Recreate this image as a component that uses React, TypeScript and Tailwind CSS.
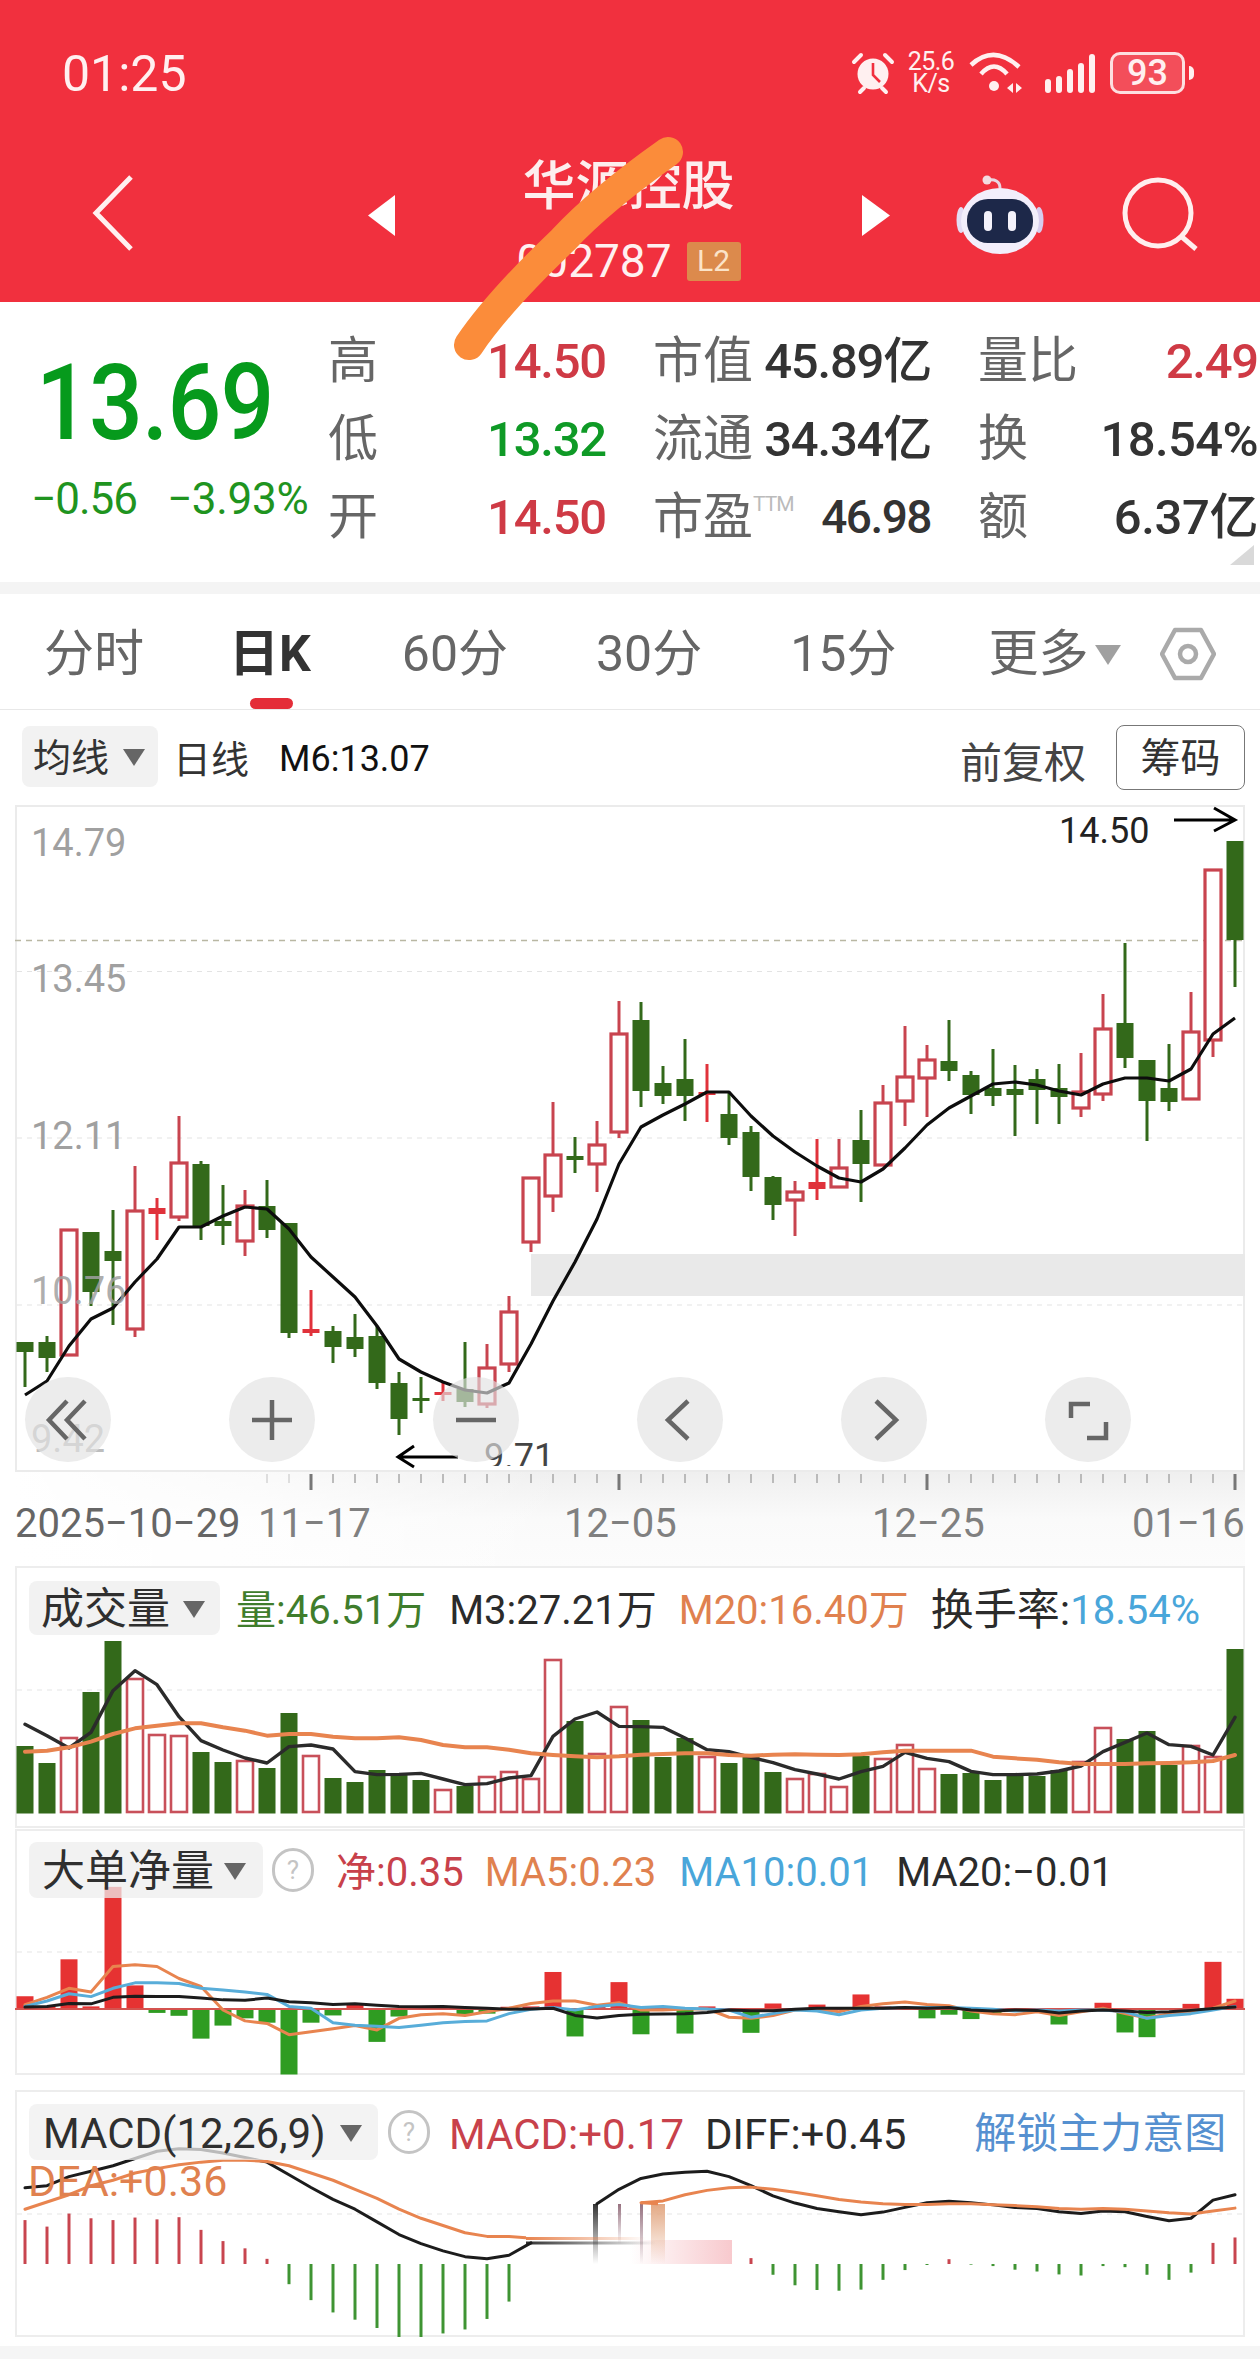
import React from "react";

// ---- chart geometry: candles sit on a 22px pitch, coordinates are page pixels ----
const X = (i: number) => 25 + 22 * i;
const pts = (ys: number[]) => ys.map((y, i) => `${X(i)},${y}`).join(" ");

type Candle = [number, number, number, number, "g" | "h" | "r"];
const candles: Candle[] = [
  [1343, 1343, 1353, 1388, "g"], [1337, 1343, 1359, 1373, "g"], [1231, 1231, 1356, 1356, "h"], [1233, 1233, 1293, 1307, "g"],
  [1211, 1252, 1262, 1326, "g"], [1167, 1212, 1330, 1338, "h"], [1199, 1209, 1215, 1241, "r"], [1117, 1164, 1218, 1222, "h"],
  [1162, 1165, 1227, 1241, "g"], [1186, 1222, 1227, 1246, "g"], [1191, 1207, 1242, 1257, "h"], [1181, 1207, 1231, 1239, "g"],
  [1224, 1224, 1334, 1339, "g"], [1291, 1330, 1334, 1337, "r"], [1327, 1332, 1348, 1364, "g"], [1315, 1338, 1350, 1358, "g"],
  [1327, 1337, 1384, 1390, "g"], [1373, 1384, 1420, 1436, "g"], [1378, 1399, 1402, 1414, "g"], [1384, 1393, 1396, 1402, "r"],
  [1343, 1390, 1403, 1408, "g"], [1345, 1369, 1405, 1409, "h"], [1297, 1313, 1365, 1373, "h"], [1179, 1179, 1243, 1253, "h"],
  [1103, 1156, 1197, 1213, "h"], [1138, 1157, 1161, 1174, "g"], [1122, 1146, 1165, 1193, "h"], [1002, 1035, 1133, 1139, "h"],
  [1003, 1021, 1092, 1108, "g"], [1067, 1084, 1097, 1105, "g"], [1040, 1080, 1097, 1122, "g"], [1065, 1093, 1096, 1123, "r"],
  [1094, 1115, 1139, 1146, "g"], [1127, 1133, 1178, 1192, "g"], [1177, 1178, 1206, 1221, "g"], [1182, 1193, 1201, 1237, "h"],
  [1140, 1183, 1190, 1201, "r"], [1140, 1169, 1188, 1188, "h"], [1111, 1141, 1165, 1203, "g"], [1086, 1104, 1166, 1166, "h"],
  [1027, 1078, 1102, 1127, "h"], [1046, 1061, 1079, 1118, "h"], [1021, 1062, 1072, 1082, "g"], [1072, 1076, 1096, 1115, "g"],
  [1050, 1089, 1097, 1107, "g"], [1066, 1090, 1096, 1137, "g"], [1070, 1080, 1091, 1125, "g"], [1065, 1089, 1098, 1125, "g"],
  [1054, 1093, 1109, 1118, "h"], [995, 1030, 1095, 1102, "h"], [944, 1024, 1059, 1069, "g"], [1061, 1061, 1102, 1142, "g"],
  [1045, 1089, 1103, 1112, "g"], [993, 1033, 1100, 1100, "h"], [871, 871, 1041, 1058, "h"], [842, 842, 941, 988, "g"],
];

const ma6 = [
  1396, 1382, 1347, 1320, 1309, 1283, 1260, 1228, 1228, 1217, 1208, 1210, 1230, 1258, 1278, 1298, 1327, 1360, 1373, 1383, 1391, 1394,
  1384, 1345, 1302, 1263, 1220, 1165, 1128, 1116, 1105, 1093, 1093, 1117, 1137, 1153, 1167, 1179, 1183, 1170, 1149, 1126, 1109, 1097,
  1085, 1083, 1086, 1092, 1096, 1085, 1079, 1079, 1082, 1070, 1035, 1019,
];

const volTops = [
  1747, 1764, 1739, 1693, 1642, 1680, 1736, 1737, 1753, 1763, 1762, 1769, 1714, 1757, 1779, 1783, 1771, 1774, 1781, 1791, 1787, 1778,
  1773, 1780, 1661, 1722, 1755, 1708, 1721, 1758, 1739, 1758, 1764, 1758, 1773, 1780, 1775, 1788, 1757, 1760, 1746, 1770, 1775, 1774,
  1781, 1777, 1777, 1771, 1763, 1729, 1740, 1732, 1766, 1747, 1758, 1650,
];
const volUp = [2, 5, 6, 7, 10, 13, 19, 21, 22, 23, 24, 26, 27, 31, 35, 36, 37, 39, 40, 41, 48, 49, 53, 54];
const volY = (v: number) => 1620 + v / 3;
const m3 = [
  316, 350, 387, 340, 215, 155, 197, 293, 365, 393, 417, 432, 383, 378, 390, 458, 467, 466, 463, 480, 497, 494, 477, 470, 352, 300, 279,
  322, 323, 325, 357, 392, 398, 415, 431, 452, 465, 480, 458, 442, 400, 418, 428, 457, 467, 467, 465, 456, 441, 398, 370, 342, 377, 382,
  408, 295,
].map(volY);
const m20 = [
  398, 395, 385, 368, 345, 328, 320, 313, 313, 325, 335, 350, 345, 345, 353, 358, 358, 355, 363, 378, 385, 385, 392, 403, 408, 412, 415,
  412, 407, 405, 403, 403, 408, 410, 407, 406, 407, 408, 406, 400, 395, 395, 395, 395, 413, 418, 422, 430, 435, 435, 435, 433, 432, 430,
  426, 408,
].map(volY);

// Lower panels share one vertical scale factor.
const subY = (v: number) => 1810 + v / 2.761;
const netBars = [
  517, 545, 415, 545, 215, 487, 563, 571, 634, 598, 578, 590, 733, 590, 570, 537, 643, 573, 552, 545, 568, 565, 546, 545, 450, 628, 545,
  478, 622, 555, 620, 545, 555, 618, 537, 552, 540, 550, 512, 545, 545, 578, 568, 580, 565, 555, 550, 595, 555, 535, 617, 630, 555, 538,
  422, 524,
];
const netMa5 = [
  540, 520, 495, 505, 435, 430, 435, 468, 490, 555, 585, 592, 623, 615, 607, 598, 610, 578, 568, 565, 570, 560, 550, 537, 530, 530, 542,
  535, 555, 555, 552, 552, 575, 578, 570, 555, 552, 560, 545, 538, 533, 540, 543, 558, 565, 568, 560, 570, 560, 550, 565, 577, 565, 560,
  550, 530,
].map(subY);
const netMa10 = [
  545, 530, 510, 518, 495, 480, 480, 482, 495, 500, 505, 512, 545, 550, 590, 597, 600, 603, 597, 590, 587, 585, 565, 553, 548, 555, 545,
  540, 548, 545, 550, 552, 555, 575, 565, 555, 558, 568, 555, 550, 548, 548, 548, 550, 553, 558, 555, 558, 555, 555, 560, 578, 570, 565,
  555, 545,
].map(subY);
const netMa20 = [
  547, 545, 537, 538, 520, 517, 518, 518, 522, 527, 528, 522, 532, 535, 540, 538, 542, 545, 546, 545, 548, 550, 553, 552, 550, 570, 577,
  570, 567, 566, 565, 562, 555, 557, 557, 553, 550, 550, 550, 550, 548, 550, 548, 555, 558, 555, 556, 563, 558, 555, 558, 562, 560, 556,
  551, 547,
].map(subY);

// MACD histogram: index, far end of the bar from the zero line.
const macdBars: [number, number][] = [
  [0, 1135], [1, 1153], [2, 1117], [3, 1130], [4, 1135], [5, 1128], [6, 1133], [7, 1127], [8, 1162], [9, 1193], [10, 1213], [11, 1242],
  [12, 1312], [13, 1356], [14, 1390], [15, 1410], [16, 1433], [17, 1458], [18, 1458], [19, 1448], [20, 1437], [21, 1408], [22, 1360],
  [33, 1240], [34, 1286], [35, 1315], [36, 1328], [37, 1330], [38, 1327], [39, 1300], [40, 1273], [41, 1259], [42, 1243], [43, 1258],
  [44, 1262], [45, 1272], [46, 1277], [47, 1285], [48, 1288], [49, 1262], [50, 1265], [51, 1286], [52, 1300], [53, 1280], [54, 1198], [55, 1183],
];
const diffA = [1046, 1040, 1015, 1000, 985, 965, 945, 938, 940, 950, 962, 975, 1010, 1045, 1078, 1105, 1140, 1175, 1200, 1220, 1236, 1242, 1232, 1198];
const diffB = [1090, 1050, 1020, 1008, 1003, 1000, 1015, 1040, 1068, 1088, 1103, 1112, 1120, 1113, 1100, 1087, 1083, 1087, 1093, 1100, 1103, 1112, 1117, 1110, 1112, 1125, 1137, 1130, 1080, 1065];
const deaA = [1105, 1085, 1065, 1040, 1025, 1005, 993, 982, 975, 970, 970, 973, 985, 1005, 1025, 1050, 1075, 1105, 1130, 1150, 1170, 1180, 1180];
const deaB = [1087, 1082, 1065, 1053, 1046, 1044, 1050, 1058, 1068, 1078, 1085, 1090, 1092, 1092, 1090, 1090, 1093, 1095, 1098, 1103, 1105, 1103, 1105, 1110, 1115, 1118, 1110, 1102];

const Line = ({ ys, stroke, w = 3, from = 0 }: { ys: number[]; stroke: string; w?: number; from?: number }) => (
  <polyline
    points={ys.map((y, i) => `${X(i + from)},${y}`).join(" ")}
    fill="none"
    stroke={stroke}
    strokeWidth={w}
    strokeLinejoin="round"
    strokeLinecap="round"
  />
);

const Caret = ({ className = "" }: { className?: string }) => (
  <svg viewBox="0 0 22 17" className={`block w-[22px] h-[17px] ${className}`}>
    <path d="M0 0H22L11 17Z" fill="currentColor" />
  </svg>
);

const HelpDot = () => (
  <span className="w-[42px] h-[44px] rounded-full border-[3px] border-[#c4c4c4] flex items-center justify-center text-[26px] leading-none text-[#c4c4c4]">
    ?
  </span>
);

const RoundButton = ({ children }: { children: React.ReactNode }) => (
  <div className="w-[86px] h-[85px] rounded-full bg-[#e2e2e2]/65 flex items-center justify-center">
    <svg viewBox="0 0 46 46" className="w-[46px] h-[46px]" fill="none" stroke="#666" strokeWidth="4.5">
      {children}
    </svg>
  </div>
);

const Quote = ({ label, value, tone }: { label: React.ReactNode; value: string; tone: string }) => (
  <div className="flex items-center justify-between h-[78px]">
    <span className="text-[50px] leading-none text-[#666] whitespace-nowrap">{label}</span>
    <span className={`font-medium leading-none whitespace-nowrap ${tone}`}>{value}</span>
  </div>
);

const valueText = "text-[49px] tracking-[-1.2px]";

export default function App() {
  return (
    <div className="relative w-[1260px] h-[2378px] overflow-hidden bg-white [font-family:Roboto,'Noto_Sans_CJK_SC',sans-serif]">
      {/* red title area */}
      <header className="h-[302px] bg-[#f1303e] text-[#fff0f0] flex flex-col">
        <div className="h-[150px] pt-[46px] pl-[62px] pr-[66px] flex items-start">
          <span className="text-[50px] leading-[56px]">01:25</span>
          <div className="ml-auto flex items-center h-[46px] mt-[4px]">
            <svg viewBox="0 0 44 44" className="w-[44px] h-[44px]">
              <circle cx="22" cy="23" r="15.5" fill="#fff0f0" />
              <path d="M22 12V24L29 31" fill="none" stroke="#f1303e" strokeWidth="2.6" />
              <path d="M3 11 10 4M41 11 34 4M9 41l4-4M35 41l-4-4" stroke="#fff0f0" strokeWidth="4" strokeLinecap="round" />
            </svg>
            <div className="ml-[10px] w-[52px] text-center text-[25px] leading-[22px] tracking-[-0.5px]">
              <div>25.6</div>
              <div>K/s</div>
            </div>
            <svg viewBox="0 0 58 46" className="ml-[10px] w-[58px] h-[46px]" fill="none" stroke="#fff0f0" strokeWidth="4.5">
              <path d="M4 15Q27 -6 52 17" />
              <path d="M14 24Q27 9 40 24" />
              <circle cx="27" cy="36" r="5" fill="#fff0f0" stroke="none" />
              <path d="M46 33l-6 5 6 5zM49 33l6 5-6 5z" fill="#fff0f0" stroke="none" />
            </svg>
            <div className="ml-[20px] flex items-end gap-[5px] h-[40px]">
              <i className="block w-[6px] h-[14px] rounded-full bg-[#fff0f0]" />
              <i className="block w-[6px] h-[17px] rounded-full bg-[#fff0f0]" />
              <i className="block w-[6px] h-[24px] rounded-full bg-[#fff0f0]" />
              <i className="block w-[6px] h-[30px] rounded-full bg-[#fff0f0]" />
              <i className="block w-[6px] h-[39px] rounded-full bg-[#fff0f0]" />
            </div>
            <div className="ml-[15px] w-[75px] h-[42px] rounded-[10px] border-[3px] border-[#fddfe0] bg-white/15 flex items-center justify-center text-[36px] font-medium leading-none">
              93
            </div>
            <i className="block ml-[4px] w-[5px] h-[14px] rounded-r-full bg-[#fff0f0]" />
          </div>
        </div>
        <div className="flex items-start pl-[92px]">
          <svg viewBox="0 0 41 76" className="mt-[25px] w-[41px] h-[76px]" fill="none" stroke="#fff0f0" strokeWidth="5">
            <path d="M39 2 4 38l35 36" />
          </svg>
          <svg viewBox="0 0 27 41" className="ml-[235px] mt-[45px] w-[27px] h-[41px]">
            <path d="M27 0V41L0 20.5Z" fill="#fff" />
          </svg>
          <div className="w-[467px] flex flex-col items-center">
            <span className="mt-[9px] text-[53px] leading-[56px] font-medium text-[#fdeeee]">华源控股</span>
            <div className="mt-[26px] flex items-center gap-[15px]">
              <span className="text-[46px] leading-[40px]">002787</span>
              <span className="w-[54px] h-[39px] bg-[#dc8a4c] rounded-[3px] flex items-center justify-center text-[30px] leading-none text-[#fbe3c8]">
                L2
              </span>
            </div>
          </div>
          <svg viewBox="0 0 28 41" className="mt-[45px] w-[28px] h-[41px]">
            <path d="M0 0V41L28 20.5Z" fill="#fff" />
          </svg>
          {/* assistant robot */}
          <svg viewBox="0 0 88 80" className="ml-[66px] mt-[24px] w-[88px] h-[80px]">
            <path d="M44 14C44 7 38 5 33 6" fill="none" stroke="#e9d5e2" strokeWidth="3" />
            <circle cx="31" cy="6" r="4.5" fill="#f3dbe0" />
            <ellipse cx="5" cy="46" rx="4.5" ry="13" fill="#e2dcf3" />
            <ellipse cx="83" cy="46" rx="4.5" ry="13" fill="#d6cdee" />
            <ellipse cx="44" cy="47" rx="39" ry="33" fill="#f2eefb" />
            <rect x="11" y="25" width="66" height="44" rx="21" fill="#1d2849" />
            <rect x="28" y="37" width="8" height="20" rx="4" fill="#f4f2fb" />
            <rect x="52" y="37" width="8" height="20" rx="4" fill="#f4f2fb" />
          </svg>
          <svg viewBox="0 0 78 74" className="ml-[78px] mt-[27px] w-[78px] h-[74px]" fill="none" stroke="#ffeeee" strokeWidth="5">
            <circle cx="36" cy="36" r="33" />
            <path d="M60 60 74 72" />
          </svg>
        </div>
      </header>

      {/* quote summary */}
      <section className="h-[280px] flex pt-[20px]">
        <div className="w-[328px] pl-[36px] flex flex-col">
          <span className="mt-[31px] block origin-left scale-x-[.895] text-[106px] leading-[100px] font-medium text-[#069a1c] tracking-[-1px] whitespace-nowrap">
            13.69
          </span>
          <div className="mt-[24px] -ml-[5px] flex text-[44px] leading-none text-[#1f941f] whitespace-nowrap">
            <span className="tracking-[-1px]">−0.56</span>
            <span className="ml-[30px] tracking-[-0.3px]">−3.93%</span>
          </div>
        </div>
        <div className="grid grid-cols-[278px_278px_280px] gap-x-[47px] auto-rows-[78px] h-fit">
          <Quote label="高" value="14.50" tone={`${valueText} text-[#cf3a45]`} />
          <Quote label="市值" value="45.89亿" tone={`${valueText} text-[#333]`} />
          <Quote label="量比" value="2.49" tone={`${valueText} text-[#cf3a45]`} />
          <Quote label="低" value="13.32" tone={`${valueText} text-[#0f9a26]`} />
          <Quote label="流通" value="34.34亿" tone={`${valueText} text-[#333]`} />
          <Quote label="换" value="18.54%" tone="text-[49px] tracking-[-0.6px] text-[#333]" />
          <Quote label="开" value="14.50" tone={`${valueText} text-[#cf3a45]`} />
          <Quote
            label={
              <span className="flex items-start">
                市盈<small className="text-[21px] leading-[24px] text-[#bbb] tracking-[-1px]">TTM</small>
              </span>
            }
            value="46.98"
            tone="text-[46px] tracking-[-1.5px] text-[#333]"
          />
          <Quote label="额" value="6.37亿" tone="text-[49px] tracking-[-0.4px] text-[#333]" />
        </div>
        <svg viewBox="0 0 24 20" className="absolute left-[1230px] top-[545px] w-[24px] h-[20px]">
          <path d="M24 0V20H0Z" fill="#d9d9d9" />
        </svg>
      </section>
      <div className="h-[12px] bg-[#f4f4f4]" />

      {/* period tabs */}
      <nav className="relative h-[116px] border-b border-[#e8e8e8] flex items-center pl-[44px] pt-[4px] text-[50px] leading-none text-[#666] whitespace-nowrap">
        <span>分时</span>
        <span className="ml-[85px] font-bold text-[#333]">日K</span>
        <span className="ml-[91px]">60分</span>
        <span className="ml-[88px]">30分</span>
        <span className="ml-[88px]">15分</span>
        <span className="ml-[92px]">更多</span>
        <Caret className="ml-[7px] mt-[2px] text-[#a0a0a0] !w-[26px] !h-[20px]" />
        <svg viewBox="0 0 56 56" className="ml-[39px] w-[56px] h-[56px]" fill="none" stroke="#aaa" strokeWidth="4.5">
          <path d="M15 4H41L54 28 41 52H15L2 28Z" strokeLinejoin="round" />
          <circle cx="28" cy="28" r="8" />
        </svg>
        <i className="absolute left-[250px] bottom-0 w-[43px] h-[11px] rounded-full bg-[#e42d38]" />
      </nav>

      {/* indicator toolbar */}
      <div className="h-[95px] flex items-start pl-[22px] pr-[15px] pt-[16px] whitespace-nowrap">
        <div className="w-[136px] h-[61px] rounded-[8px] bg-[#f2f2f2] flex items-center pl-[11px] pt-[2px] text-[38px] leading-none text-[#333]">
          均线
          <Caret className="ml-[14px] text-[#666]" />
        </div>
        <span className="ml-[15px] mt-[15px] text-[38px] leading-none text-[#333]">日线</span>
        <span className="ml-[30px] mt-[15px] text-[36px] leading-none text-[#111]">M6:13.07</span>
        <span className="ml-auto mt-[17px] text-[42px] leading-none text-[#444]">前复权</span>
        <span className="ml-[30px] -mt-[1px] w-[129px] h-[65px] rounded-[8px] border border-[#777] flex items-center justify-center pt-[2px] text-[40px] leading-none text-[#333]">
          筹码
        </span>
      </div>

      {/* candlestick chart */}
      <div className="relative mx-[15px] w-[1230px] h-[667px] shadow-[inset_0_0_0_2px_#ebebeb]">
        <svg viewBox="15 806 1230 667" className="block w-[1230px] h-[667px]">
          <rect x="531" y="1255" width="714" height="42" fill="#e9e9e9" />
          {[972.5, 1139, 1306].map((y) => (
            <line key={y} x1="17" x2="1243" y1={y} y2={y} stroke="#e3e3e3" strokeWidth="1.2" strokeDasharray="5 5" />
          ))}
          <line x1="15" x2="1245" y1="941.5" y2="941.5" stroke="#b9b7a3" strokeWidth="1.5" strokeDasharray="6 5" />
          {candles.map(([wt, bt, bb, wb, k], i) => {
            const c = k === "g" ? "#33691a" : k === "r" ? "#e0323b" : "#c8444f";
            const x = X(i);
            return (
              <g key={i}>
                <line x1={x} x2={x} y1={wt} y2={wb} stroke={c} strokeWidth="3" />
                {k === "h" ? (
                  <rect x={x - 8} y={bt} width="16" height={bb - bt} fill="#fff" stroke={c} strokeWidth="3.2" />
                ) : (
                  <rect x={x - 8.5} y={bt} width="17" height={bb - bt} fill={c} />
                )}
              </g>
            );
          })}
          <polyline points={pts(ma6)} fill="none" stroke="#0d0d0d" strokeWidth="3.2" strokeLinejoin="round" />
          <path d="M458 1458H398M414 1447 398 1458 414 1468" fill="none" stroke="#000" strokeWidth="3" />
          <path d="M1174 821H1234M1214 809 1235 821 1214 832" fill="none" stroke="#000" strokeWidth="3" />
        </svg>
        <span className="absolute left-[16px] top-[19px] text-[38px] leading-none text-[#a0a0a0]">14.79</span>
        <span className="absolute left-[16px] top-[155px] text-[38px] leading-none text-[#a0a0a0]">13.45</span>
        <span className="absolute left-[16px] top-[312px] text-[38px] leading-none text-[#a0a0a0]">12.11</span>
        <span className="absolute left-[16px] top-[467px] text-[38px] leading-none text-[#a0a0a0]/85">10.76</span>
        <span className="absolute left-[16px] top-[615px] text-[38px] leading-none text-[#a0a0a0]/70">9.42</span>
        <span className="absolute left-[1044px] top-[8px] text-[36px] leading-none text-[#222]">14.50</span>
        <span className="absolute left-[469px] top-[634px] h-[27px] overflow-hidden text-[36px] leading-[36px] text-[#444]">9.71</span>
        {/* floating chart controls */}
        <div className="absolute left-[10px] top-[572px] flex gap-[118px]">
          <RoundButton>
            <path d="M22 4 4 23l18 19M40 4 22 23l18 19" />
          </RoundButton>
          <RoundButton>
            <path d="M23 3V43M3 23H43" />
          </RoundButton>
          <RoundButton>
            <path d="M3 23H43" />
          </RoundButton>
          <RoundButton>
            <path d="M31 4 11 23l20 19" />
          </RoundButton>
          <RoundButton>
            <path d="M15 4l20 19-20 19" />
          </RoundButton>
          <RoundButton>
            <path d="M6 21V7H25M41 25V41H22" />
          </RoundButton>
        </div>
      </div>

      {/* date axis */}
      <div className="relative mx-[15px] w-[1230px] h-[94px] bg-linear-to-b from-[#efefef] via-[#fafafa] to-[#fcfcfc]">
        <div className="absolute inset-0 bg-linear-to-r from-white via-white/70 via-20% to-transparent to-45%" />
        <svg viewBox="15 1473 1230 20" className="relative block w-[1230px] h-[20px]">
          {candles.map((_, i) =>
            i < 11 ? null : (
              <line
                key={i}
                x1={X(i)}
                x2={X(i)}
                y1="1475"
                y2={(i - 13) % 14 === 0 ? 1491 : 1484}
                stroke={i < 13 ? "#d4d4d4" : (i - 13) % 14 === 0 ? "#777" : "#a8a8a8"}
                strokeWidth={(i - 13) % 14 === 0 ? 3 : 1.5}
              />
            ),
          )}
        </svg>
        <div className="relative mt-[12px] flex text-[40px] leading-none text-[#808080] whitespace-nowrap">
          <span className="w-[243px] text-[#666]">2025−10−29</span>
          <span className="w-[306px]">11−17</span>
          <span className="w-[308px]">12−05</span>
          <span className="w-[260px]">12−25</span>
          <span>01−16</span>
        </div>
      </div>

      {/* volume */}
      <div className="relative mx-[15px] w-[1230px] h-[262px] shadow-[inset_0_0_0_2px_#ededed]">
        <svg viewBox="15 1567 1230 262" className="block w-[1230px] h-[262px]">
          <line x1="17" x2="1243" y1="1691" y2="1691" stroke="#e5e5e5" strokeWidth="1.2" strokeDasharray="5 5" />
          {volTops.map((t, i) =>
            volUp.includes(i) ? (
              <rect key={i} x={X(i) - 8} y={t} width="16" height={1813 - t} fill="#fff" stroke="#c8505a" strokeWidth="2.6" />
            ) : (
              <rect key={i} x={X(i) - 8.5} y={t} width="17" height={1814.5 - t} fill="#33691a" />
            ),
          )}
          <Line ys={m3} stroke="#2b2b2b" w={3.4} />
          <Line ys={m20} stroke="#e8844f" w={4} />
        </svg>
        <div className="absolute left-[14px] top-[15px] flex items-center h-[54px] text-[40px] leading-none whitespace-nowrap">
          <div className="w-[191px] h-[54px] rounded-[8px] bg-[#f2f2f2] flex items-center pl-[12px] pt-[2px] text-[43px] text-[#2f2f2f]">
            成交量
            <Caret className="ml-[13px] text-[#666]" />
          </div>
          <span className="ml-[16px] pt-[5px] text-[#3f7d2c]">量:46.51万</span>
          <span className="ml-[23px] pt-[5px] text-[#2b2b2b]">M3:27.21万</span>
          <span className="ml-[22px] pt-[5px] text-[#e0814f]">M20:16.40万</span>
          <span className="ml-[22px] pt-[5px] text-[43px] text-[#2b2b2b]">换手率:</span>
          <span className="pt-[5px] text-[#49a6da]">18.54%</span>
        </div>
      </div>

      {/* large order net volume */}
      <div className="relative mx-[15px] mt-[1px] w-[1230px] h-[246px] shadow-[inset_0_0_0_2px_#ededed]">
        <svg viewBox="15 1830 1230 246" className="block w-[1230px] h-[246px]">
          <line x1="17" x2="1243" y1="1953" y2="1953" stroke="#e5e5e5" strokeWidth="1.2" strokeDasharray="5 5" />
          {netBars.map((v, i) => {
            const y = subY(v);
            return y < 2010 ? (
              <rect key={i} x={X(i) - 8.5} y={y} width="17" height={2010 - y} fill="#e63232" />
            ) : (
              <rect key={i} x={X(i) - 8.5} y={2010} width="17" height={y - 2010} fill="#2f9c22" />
            );
          })}
          <line x1="15" x2="1245" y1="2010" y2="2010" stroke="#d4534f" strokeWidth="2" />
          <Line ys={netMa5} stroke="#e8844f" w={3} />
          <Line ys={netMa10} stroke="#58add9" w={3} />
          <Line ys={netMa20} stroke="#1c1c1c" w={3} />
        </svg>
        <div className="absolute left-[14px] top-[13px] flex items-center h-[56px] text-[40px] leading-none whitespace-nowrap">
          <div className="w-[234px] h-[56px] rounded-[8px] bg-[#eeeeee]/75 flex items-center pl-[13px] pt-[3px] text-[43px] text-[#2f2f2f]">
            大单净量
            <Caret className="ml-[10px] text-[#666]" />
          </div>
          <span className="ml-[9px]">
            <HelpDot />
          </span>
          <span className="ml-[22px] pt-[6px] text-[#c8414b]">净:0.35</span>
          <span className="ml-[21px] pt-[6px] text-[#e0814f]">MA5:0.23</span>
          <span className="ml-[23px] pt-[6px] text-[#49a6da]">MA10:0.01</span>
          <span className="ml-[23px] pt-[6px] text-[#2b2b2b]">MA20:−0.01</span>
        </div>
      </div>

      {/* MACD */}
      <div className="relative mx-[15px] mt-[15px] w-[1230px] h-[247px] shadow-[inset_0_0_0_2px_#ededed]">
        <svg viewBox="15 2091 1230 247" className="block w-[1230px] h-[247px]">
          <defs>
            <linearGradient id="fadeDark" x1="0" x2="1" y1="0" y2="0">
              <stop offset="0" stopColor="#333" />
              <stop offset="1" stopColor="#333" stopOpacity="0" />
            </linearGradient>
            <linearGradient id="fadeWarm" x1="0" x2="1" y1="0" y2="0">
              <stop offset="0" stopColor="#e8844f" />
              <stop offset="1" stopColor="#e8844f" stopOpacity="0" />
            </linearGradient>
            <linearGradient id="fadePink" x1="0" x2="1" y1="0" y2="0">
              <stop offset="0" stopColor="#f3a5ac" stopOpacity="0" />
              <stop offset="1" stopColor="#f3a5ac" stopOpacity=".6" />
            </linearGradient>
            <linearGradient id="dropDark" x1="0" x2="0" y1="0" y2="1">
              <stop offset="0" stopColor="#333" />
              <stop offset="1" stopColor="#333" stopOpacity="0" />
            </linearGradient>
            <linearGradient id="dropMauve" x1="0" x2="0" y1="0" y2="1">
              <stop offset="0" stopColor="#96717f" />
              <stop offset="1" stopColor="#96717f" stopOpacity="0" />
            </linearGradient>
            <linearGradient id="dropPeach" x1="0" x2="0" y1="0" y2="1">
              <stop offset="0" stopColor="#e3a883" />
              <stop offset="1" stopColor="#e3a883" stopOpacity="0" />
            </linearGradient>
          </defs>
          <line x1="17" x2="1243" y1="2215" y2="2215" stroke="#e5e5e5" strokeWidth="1.2" strokeDasharray="5 5" />
          {macdBars.map(([i, v]) => {
            const y = subY(v);
            return (
              <line key={i} x1={X(i)} x2={X(i)} y1={2265} y2={y} stroke={y < 2265 ? "#c8454f" : "#3f9433"} strokeWidth="3" />
            );
          })}
          <rect x="630" y="2241" width="102" height="24" fill="url(#fadePink)" />
          <rect x="593" y="2205" width="5" height="60" fill="url(#dropDark)" />
          <rect x="618" y="2205" width="3" height="40" fill="url(#dropMauve)" />
          <rect x="640" y="2205" width="3" height="60" fill="url(#dropMauve)" />
          <rect x="651" y="2205" width="14" height="60" fill="url(#dropPeach)" />
          <rect x="526" y="2242.5" width="130" height="3" fill="url(#fadeDark)" />
          <rect x="526" y="2238" width="120" height="3" fill="url(#fadeWarm)" />
          <Line ys={diffA.map(subY)} stroke="#1c1c1c" w={3} />
          <Line ys={deaA.map(subY)} stroke="#e8844f" w={3} />
          <polyline points={`${X(22)},${subY(1180)} 526,${subY(1184)}`} fill="none" stroke="#e8844f" strokeWidth="3" />
          <Line ys={diffB.map(subY)} stroke="#1c1c1c" w={3} from={26} />
          <Line ys={deaB.map(subY)} stroke="#e8844f" w={3} from={28} />
          <polyline points={`658,${subY(1090)} ${X(28)},${subY(1087)}`} fill="none" stroke="#e8844f" strokeWidth="3" />
        </svg>
        <div className="absolute left-[14px] top-[14px] flex items-center h-[56px] text-[42px] leading-none whitespace-nowrap">
          <div className="w-[349px] h-[56px] rounded-[8px] bg-[#efefef]/75 flex items-center pl-[14px] pt-[3px] text-[42px] text-[#2f2f2f]">
            MACD(12,26,9)
            <Caret className="ml-[14px] text-[#666]" />
          </div>
          <span className="ml-[10px]">
            <HelpDot />
          </span>
          <span className="ml-[19px] pt-[5px] text-[#c8414b]">MACD:+0.17</span>
          <span className="ml-[21px] pt-[5px] text-[#2b2b2b]">DIFF:+0.45</span>
          <span className="ml-[68px] pt-[3px] text-[#5590d0]">解锁主力意图</span>
        </div>
        <span className="absolute left-[13px] top-[70px] text-[43px] leading-none text-[#e0814f] whitespace-nowrap">DEA:+0.36</span>
      </div>

      <div className="mt-[9px] h-[13px] bg-[#f5f5f5]" />

      {/* pen stroke drawn across the heading */}
      <svg viewBox="0 0 1260 400" className="absolute left-0 top-0 w-[1260px] h-[400px] pointer-events-none">
        <path d="M668 152Q600 200 563 240 498 302 469 345" fill="none" stroke="#fb8c3a" strokeWidth="30" strokeLinecap="round" strokeLinejoin="round" />
      </svg>
    </div>
  );
}
